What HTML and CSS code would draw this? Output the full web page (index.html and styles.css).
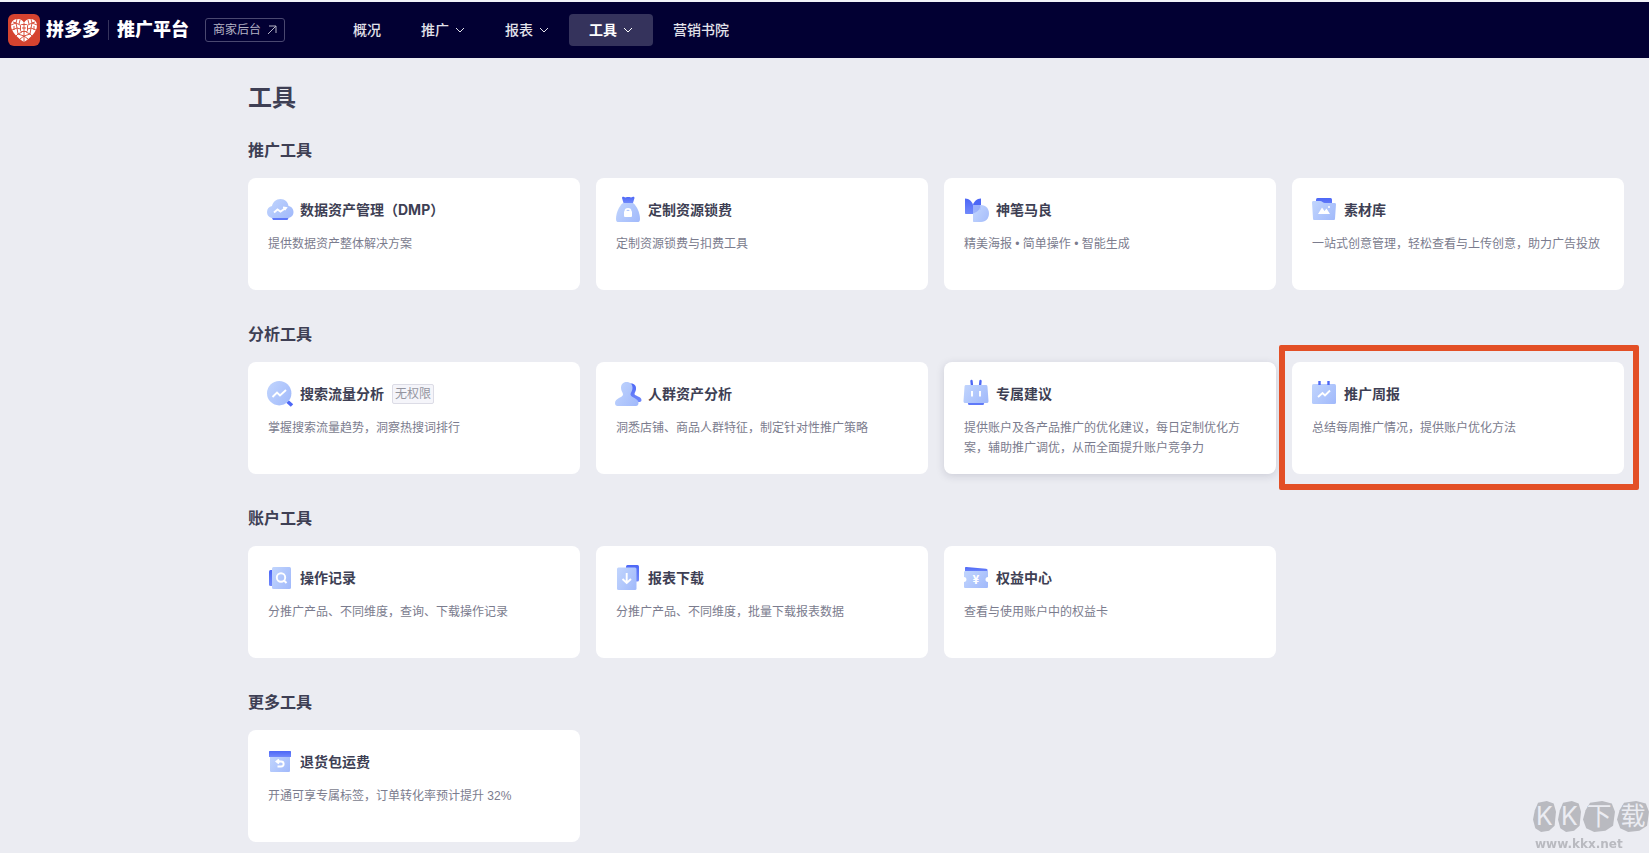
FILE: index.html
```html
<!DOCTYPE html>
<html lang="zh-CN">
<head>
  <meta charset="UTF-8" />
  <meta name="viewport" content="width=device-width, initial-scale=1.0" />
  <title>工具 - 拼多多推广平台</title>
  <link rel="stylesheet" href="styles.css">
</head>
<body>
  <!-- degradados compartidos por los iconos -->
  <svg class="defs" width="0" height="0" aria-hidden="true">
    <defs>
      <linearGradient id="light" x1="0" y1="0.2" x2="1" y2="0.8">
        <stop offset="0" stop-color="#bfd3fd" />
        <stop offset="1" stop-color="#a3bbfb" />
      </linearGradient>
      <linearGradient id="dark" x1="0" y1="0" x2="0" y2="1">
        <stop offset="0" stop-color="#4d67f6" />
        <stop offset="1" stop-color="#7189fb" />
      </linearGradient>
    </defs>
  </svg>

  <header class="topbar">
    <a class="brand" href="#">
      <svg class="brand-logo" viewBox="0 0 32 32" aria-hidden="true">
        <rect width="32" height="32" rx="6" fill="#d5432f" />
        <path d="M16 28 C10 24 3 18 3 11.500 C3 7.500 6 5 9.500 5 C12.500 5 15 6.500 16 9 C17 6.500 19.500 5 22.500 5 C26 5 29 7.500 29 11.500 C29 18 22 24 16 28Z" fill="#fff" />
        <g fill="none" stroke="#d5432f" stroke-width="0.9">
          <rect x="12.500" y="10.500" width="7" height="7" rx="1" />
          <path d="M16 9V13M14 14H18M16 13V17M9 5L8 9L12 11M23 5L24 9L20 11M3 11L8 9L9 14L12.500 15M29 11L24 9L23 14L19.500 15M4 16L9 14L10 20L14 18M28 16L23 14L22 20L18 18M8 22L10 20L16 22L22 20L24 22M16 17.500V28M12 25L16 22L20 25M5 8L8 9M27 8L24 9M6 12L6 16M26 12L26 16M12 6L11 10M20 6L21 10" />
        </g>
      </svg>
      <span>拼多多</span>
      <span class="brand-sub">推广平台</span>
    </a>
    <button type="button" class="backend-btn">
      商家后台
      <svg width="10" height="10" viewBox="0 0 10 10" aria-hidden="true"><path d="M1 9L9 1M2 1H9V8" /></svg>
    </button>
    <nav class="nav">
      <a href="#">概况</a>
      <a href="#">推广 <svg class="chevron" viewBox="0 0 10 6" aria-hidden="true"><path d="M1 1L5 5L9 1" /></svg></a>
      <a href="#">报表 <svg class="chevron" viewBox="0 0 10 6" aria-hidden="true"><path d="M1 1L5 5L9 1" /></svg></a>
      <a href="#" class="active">工具 <svg class="chevron" viewBox="0 0 10 6" aria-hidden="true"><path d="M1 1L5 5L9 1" /></svg></a>
      <a href="#">营销书院</a>
    </nav>
  </header>

  <main>
    <h1>工具</h1>

    <section>
      <h2>推广工具</h2>
      <div class="cards">
        <a class="card" href="#">
          <div class="card-head">
            <svg class="icon" viewBox="0 0 24 24" aria-hidden="true">
              <path d="M5 20C1.500 20 -1 17.500 -1 14C-1 11 1 8.500 4 8C5 4 8 1 12.500 1C17 1 20 4 20.500 8C23.500 8.500 25.500 11 25.500 14C25.500 17.500 23 20 19.500 20Z" fill="url(#light)" />
              <path d="M4 20H20.500L19.500 22H5Z" fill="#5f79f9" />
              <path class="line" d="M6 14.500L9.500 11.500L12.500 13.500L17 10.500M15 9.500L18 10L16.500 12" />
            </svg>
            <h3>数据资产管理（DMP）</h3>
          </div>
          <p>提供数据资产整体解决方案</p>
        </a>
        <a class="card" href="#">
          <div class="card-head">
            <svg class="icon" viewBox="0 0 24 24" aria-hidden="true">
              <path d="M6 0C6 -1 7 -1.500 8 -1C9 -0.500 10 -0.500 11 -1H13.500C14.500 -0.500 15.500 -0.500 16.500 -1C17.500 -1.500 18.500 -1 18.500 0L17 5H7.500Z" fill="url(#dark)" />
              <path d="M7 5H17C21 8 24 15 24 21C24 23.500 23 24 21.500 24H2.500C1 24 0 23.500 0 21C0 15 3 8 7 5Z" fill="url(#light)" />
              <rect x="8" y="13" width="8" height="6" rx="1" fill="#fff" />
              <path class="line" d="M9.500 13.500V13C9.500 10.200 14.500 10.200 14.500 13V13.500" />
            </svg>
            <h3>定制资源锁费</h3>
          </div>
          <p>定制资源锁费与扣费工具</p>
        </a>
        <a class="card" href="#">
          <div class="card-head">
            <svg class="icon" viewBox="0 0 24 24" aria-hidden="true">
              <path d="M1 0.500C5.500 0.500 8 4 9 6.500V16H2C1.300 16 1 15.700 1 15Z" fill="url(#dark)" />
              <path d="M17 0.500C12.500 0.500 10 4 9 6.500V12H17Z" fill="#4d67f6" />
              <path d="M9 7H17C22 7 25 11 25 15.500C25 20 22 24 17 24H10C9.300 24 9 23.700 9 23Z" fill="url(#light)" opacity="0.95" />
              <path d="M9 7H16C17 10 14 14 9 15.500Z" fill="#7c93fa" opacity="0.5" />
            </svg>
            <h3>神笔马良</h3>
          </div>
          <p>精美海报 • 简单操作 • 智能生成</p>
        </a>
        <a class="card" href="#">
          <div class="card-head">
            <svg class="icon" viewBox="0 0 24 24" aria-hidden="true">
              <rect x="4" y="0" width="16" height="10" rx="1.500" fill="url(#dark)" />
              <path d="M0 4.500C0 3.500 0.500 3 1.500 3H8C10 3 11 5 13 5H22.500C23.500 5 24 5.500 24 6.500L23 20.500C23 21.500 22.500 22 21.500 22H2.500C1.500 22 1 21.500 1 20.500Z" fill="url(#light)" />
              <path d="M6 16L10 9.500L12.500 13L14.500 10.500L18 16Z" fill="#fff" />
              <circle cx="17" cy="9" r="1" fill="#fff" />
            </svg>
            <h3>素材库</h3>
          </div>
          <p>一站式创意管理，轻松查看与上传创意，助力广告投放</p>
        </a>
      </div>
    </section>

    <section>
      <h2>分析工具</h2>
      <div class="cards">
        <a class="card" href="#">
          <div class="card-head">
            <svg class="icon" viewBox="0 0 24 24" aria-hidden="true">
              <path d="M19.500 19.500L24 23.500" stroke="#4d67f6" stroke-width="3.600" />
              <circle cx="11.200" cy="11.200" r="12.200" fill="url(#light)" />
              <path class="line" d="M4.500 15L9 10.500L12 13.500L18 8" />
            </svg>
            <h3>搜索流量分析</h3>
            <span class="tag">无权限</span>
          </div>
          <p>掌握搜索流量趋势，洞察热搜词排行</p>
        </a>
        <a class="card" href="#">
          <div class="card-head">
            <svg class="icon" viewBox="0 0 24 24" aria-hidden="true">
              <path d="M11 1.500H15C18.500 1.500 20.500 4 20 7.500C19.800 9.500 18.500 10.500 18.500 12C18.500 14 25.500 14.500 25.500 18C25.500 19.500 24.500 20 23 20H11Z" fill="url(#dark)" />
              <path d="M10.500 0C14.500 0 16.500 2.500 16.500 6C16.500 9 14.500 10.500 14.500 12.500C14.500 15.500 22.500 16 22.500 21C22.500 23 21.500 24 20 24H1.500C0 24 -1 23 -1 21C-1 16 7 15.500 7 12.500C7 10.500 5 9 5 6C5 2.500 7 0 10.500 0Z" fill="url(#light)" />
            </svg>
            <h3>人群资产分析</h3>
          </div>
          <p>洞悉店铺、商品人群特征，制定针对性推广策略</p>
        </a>
        <a class="card hovered" href="#">
          <div class="card-head">
            <svg class="icon" viewBox="0 0 24 24" aria-hidden="true">
              <path d="M7.500 -1L8 4M16.500 -1L16 4" stroke="#4d67f6" stroke-width="2.400" stroke-linecap="round" />
              <path d="M3.500 20H20.500L19.500 23H4.500Z" fill="#5f79f9" />
              <path d="M2.500 3H21.500C23 3 23.500 3.500 23.500 5L24.500 19C24.500 20.500 24 21 22.500 21H1.500C0 21 -0.500 20.500 -0.500 19L0.500 5C0.500 3.500 1 3 2.500 3Z" fill="url(#light)" />
              <path class="line" d="M8 9V14.500M16 9V14.500" />
            </svg>
            <h3>专属建议</h3>
          </div>
          <p>提供账户及各产品推广的优化建议，每日定制优化方案，辅助推广调优，从而全面提升账户竞争力</p>
        </a>
        <a class="card marked" href="#">
          <div class="card-head">
            <svg class="icon" viewBox="0 0 24 24" aria-hidden="true">
              <rect x="0" y="2" width="24" height="20" rx="1.500" fill="url(#light)" />
              <path d="M7.500 -1V3M16.500 -1V3" stroke="#4d67f6" stroke-width="2.400" />
              <path class="line" d="M6 15L10.500 11L13 13.500L18 8.500" />
            </svg>
            <h3>推广周报</h3>
          </div>
          <p>总结每周推广情况，提供账户优化方法</p>
        </a>
      </div>
    </section>

    <section>
      <h2>账户工具</h2>
      <div class="cards">
        <a class="card" href="#">
          <div class="card-head">
            <svg class="icon" viewBox="0 0 24 24" aria-hidden="true">
              <rect x="1" y="4" width="10" height="16" rx="1.500" fill="url(#dark)" />
              <rect x="4" y="1" width="19" height="22" rx="1.500" fill="url(#light)" />
              <circle class="line" cx="13" cy="11.500" r="4.200" />
              <path class="line" d="M16 14.500L18.500 17" />
            </svg>
            <h3>操作记录</h3>
          </div>
          <p>分推广产品、不同维度，查询、下载操作记录</p>
        </a>
        <a class="card" href="#">
          <div class="card-head">
            <svg class="icon" viewBox="0 0 24 24" aria-hidden="true">
              <rect x="10" y="-1" width="13" height="16.500" rx="1.500" fill="url(#dark)" />
              <rect x="1" y="1.500" width="19.500" height="22.500" rx="1.500" fill="url(#light)" />
              <path class="line" d="M10.700 7V17M6.500 13L10.700 17L15 13" />
            </svg>
            <h3>报表下载</h3>
          </div>
          <p>分推广产品、不同维度，批量下载报表数据</p>
        </a>
        <a class="card" href="#">
          <div class="card-head">
            <svg class="icon" viewBox="0 0 24 24" aria-hidden="true">
              <path d="M1 5V2C1 1.300 1.500 1 2.200 1L22 2.800C23 3 23.500 3.300 23.500 4V6H1Z" fill="url(#dark)" />
              <path d="M1.500 5H22.500C23.500 5 24 5.500 24 6.500V11C20.700 11 20.700 16 24 16V20.500C24 21.500 23.500 22 22.500 22H1.500C0.500 22 0 21.500 0 20.500V16C3.300 16 3.300 11 0 11V6.500C0 5.500 0.500 5 1.500 5Z" fill="url(#light)" />
              <text x="12" y="18" text-anchor="middle" class="icon-text">¥</text>
            </svg>
            <h3>权益中心</h3>
          </div>
          <p>查看与使用账户中的权益卡</p>
        </a>
      </div>
    </section>

    <section>
      <h2>更多工具</h2>
      <div class="cards">
        <a class="card" href="#">
          <div class="card-head">
            <svg class="icon" viewBox="0 0 24 24" aria-hidden="true">
              <path d="M2 6H22V20.500C22 21.500 21.500 22 20.500 22H3.500C2.500 22 2 21.500 2 20.500Z" fill="url(#light)" />
              <path d="M2 1H22C22.700 1 23 1.300 23 2V7H1V2C1 1.300 1.300 1 2 1Z" fill="url(#dark)" />
              <path class="line" d="M8.500 11.500H13C16.500 11.500 16.500 16.500 13 16.500H9.500M11 9.500L8.500 11.500L11 13.500" />
            </svg>
            <h3>退货包运费</h3>
          </div>
          <p>开通可享专属标签，订单转化率预计提升 32%</p>
        </a>
      </div>
    </section>
  </main>

  <div class="watermark">
    <div class="watermark-name">
      <span>K</span><span>K</span><span class="wide">下</span><span class="wide">载</span>
    </div>
    <div class="watermark-url">www.kkx.net</div>
  </div>
</body>
</html>
```
FILE: styles.css
```css
* {
  box-sizing: border-box;
}

body {
  margin: 0;
  border-top: 2px solid #f1f2f8;
  background-color: #ebecf2;
  color: #3e3f54;
  font-family: Inter, "Noto Sans CJK SC", sans-serif;
  font-size: 12px;
}

a {
  color: inherit;
  text-decoration: none;
}

h1,
h2,
h3,
p {
  margin: 0;
}

.defs {
  position: absolute;
}

/* Header */
.topbar {
  display: flex;
  align-items: center;
  height: 56px;
  padding: 0 8px;
  background-color: #020033;
  color: #fff;
}

.brand {
  display: flex;
  align-items: center;
  gap: 6px;
  font-size: 18px;
  font-weight: 900;
  line-height: 20px;
}

.brand-logo {
  width: 32px;
  height: 32px;
}

.brand-sub {
  margin-left: 2px;
  padding-left: 8px;
  border-left: 1px solid #35335c;
}

.backend-btn {
  display: flex;
  align-items: center;
  gap: 6px;
  height: 24px;
  margin-left: 16px;
  padding: 0 7px;
  border: 1px solid #4a4870;
  border-radius: 3px;
  background: none;
  color: #b3b2c4;
  font-family: inherit;
  font-size: 12px;
  line-height: 20px;
  cursor: pointer;
}

.backend-btn svg,
.chevron {
  fill: none;
  stroke: currentColor;
}

.nav {
  display: flex;
  margin-left: 48px;
}

.nav a {
  display: flex;
  align-items: center;
  gap: 6px;
  height: 32px;
  padding: 0 20px;
  border-radius: 4px;
  color: #e2e2ea;
  font-size: 14px;
  font-weight: 500;
  line-height: 20px;
}

.nav a.active {
  background-color: #35335c;
  color: #fff;
  font-weight: bold;
}

.chevron {
  width: 10px;
  height: 6px;
}

/* Content */
main {
  padding: 24px 25px 0 248px;
}

h1 {
  font-size: 24px;
  line-height: 32px;
}

section {
  margin-top: 24px;
}

section + section {
  margin-top: 32px;
}

h2 {
  margin-bottom: 16px;
  font-size: 16px;
  line-height: 24px;
}

.cards {
  display: grid;
  grid-template-columns: repeat(4, 1fr);
  gap: 16px;
}

.card {
  position: relative;
  min-height: 112px;
  padding: 20px 20px 16px;
  border-radius: 8px;
  background-color: #fff;
}

.card.hovered {
  box-shadow: 0 2px 8px rgba(30, 30, 60, 0.15);
}

.card.marked::after {
  content: "";
  position: absolute;
  inset: -17px -15px -16px -13px;
  border: 6px solid #e34f26;
  border-radius: 2px;
}

.card-head {
  display: flex;
  align-items: center;
  gap: 8px;
  height: 24px;
}

.card h3 {
  font-size: 14px;
  line-height: 20px;
}

.card p {
  margin-top: 12px;
  color: #7b7c8e;
  font-family: "Liberation Sans", "Noto Sans CJK SC", sans-serif;
  line-height: 20px;
}

.tag {
  padding: 0 2px;
  border: 1px solid #dcdce6;
  border-radius: 2px;
  background-color: #f5f5fa;
  color: #94959f;
  line-height: 18px;
}

.icon {
  width: 24px;
  height: 24px;
  overflow: visible;
}

.icon .line {
  fill: none;
  stroke: #fff;
  stroke-width: 1.9;
}

.icon-text {
  fill: #fff;
  font-size: 12px;
  font-weight: bold;
}

/* Watermark */
.watermark {
  position: fixed;
  right: 0;
  bottom: 0;
  width: 116px;
  color: #b9bac0;
}

.watermark-name {
  display: flex;
  gap: 2px;
}

.watermark-name span {
  width: 23px;
  height: 31px;
  background-color: #b9bac0;
  clip-path: polygon(22% 6%, 60% 0, 90% 8%, 100% 35%, 94% 80%, 70% 96%, 35% 100%, 10% 88%, 0 60%, 8% 30%);
  color: #ebecf2;
  font-size: 25px;
  line-height: 30px;
  text-align: center;
}

.watermark-name .wide {
  width: 32px;
}

.watermark-url {
  height: 21px;
  padding-left: 2px;
  font-family: "DejaVu Sans", sans-serif;
  font-size: 12px;
  font-weight: bold;
  line-height: 24px;
}
```
